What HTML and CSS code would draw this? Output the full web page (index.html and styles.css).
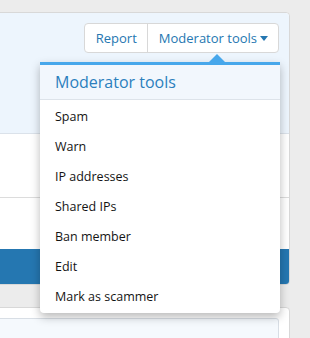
FILE: index.html
```html
<!DOCTYPE html>
<html lang="en">
<head>
    <meta charset="UTF-8">
    <title>Member profile</title>
    <link rel="stylesheet" href="styles.css">
</head>
<body>

    <div class="page">

        <!-- Cabeçalho do perfil -->
        <div class="block">
            <div class="block-top">
                <div class="button-group">
                    <a href="#" class="button">Report</a>
                    <a href="#" class="button is-open">Moderator tools<span class="caret"></span></a>
                </div>

                <!-- Menu de moderação -->
                <div class="menu">
                    <span class="menu-arrow"></span>
                    <h3 class="menu-header">Moderator tools</h3>
                    <div class="menu-list">
                        <a href="#" class="menu-item">Spam</a>
                        <a href="#" class="menu-item">Warn</a>
                        <a href="#" class="menu-item">IP addresses</a>
                        <a href="#" class="menu-item">Shared IPs</a>
                        <a href="#" class="menu-item">Ban member</a>
                        <a href="#" class="menu-item">Edit</a>
                        <a href="#" class="menu-item">Mark as scammer</a>
                    </div>
                </div>
            </div>
            <div class="block-row"></div>
            <div class="block-row last"></div>
            <div class="block-footer"></div>
        </div>

        <div class="block">
            <div class="block-body">
                <div class="inner-box"></div>
            </div>
        </div>

    </div>

</body>
</html>
```

FILE: styles.css
```css
* {
    box-sizing: border-box;
    margin: 0;
    padding: 0;
}

body {
    font-family: "Open Sans", "Noto Sans", Arial, sans-serif;
    background-color: #ececec;
    overflow: hidden;
}

.page {
    padding-top: 12px;
    display: flex;
    flex-direction: column;
    gap: 22px;
}

/* Blocos */
.block {
    width: 301px;
    margin-left: -11px;
    background-color: #fff;
    border: 1px solid #d8d8d8;
    border-radius: 4px;
}

.block-top {
    position: relative;
    height: 121px;
    background-color: #edf5fd;
    border-bottom: 1px solid #dbe2ea;
    border-radius: 4px 4px 0 0;
    display: flex;
    justify-content: flex-end;
    align-items: flex-start;
    padding: 10px 10px 0 0;
}

.block-row {
    height: 64px;
    border-bottom: 1px solid #dcdcdc;
}

.block-row.last {
    height: 51px;
    border-bottom: none;
}

.block-footer {
    height: 35px;
    background-color: #2577b1;
    border-radius: 0 0 3px 3px;
}

.block-body {
    padding: 10px 10px 0 0;
    height: 60px;
}

.inner-box {
    height: 50px;
    background-color: #f5f9fd;
    border: 1px solid #d8dee5;
    border-radius: 3px;
}

/* Botões */
.button-group {
    display: flex;
    background-color: #fff;
    border: 1px solid #d8d8d8;
    border-radius: 4px;
}

.button {
    display: flex;
    align-items: center;
    height: 28px;
    padding: 0 10px 0 11px;
    font-size: 13px;
    color: #2577b1;
    text-decoration: none;
}

.button + .button {
    border-left: 1px solid #d8d8d8;
}

.caret {
    margin-left: 3px;
    border-left: 4px solid transparent;
    border-right: 4px solid transparent;
    border-top: 5px solid #2577b1;
}

/* Menu */
.menu {
    position: absolute;
    top: 49px;
    left: 50px;
    width: 240px;
    z-index: 10;
    background-color: #fff;
    border-top: 3px solid #47a7eb;
    border-radius: 0 0 4px 4px;
    box-shadow: 0 4px 10px rgba(0, 0, 0, 0.28);
}

.menu-arrow {
    position: absolute;
    top: -11px;
    left: 169px;
    border-left: 8px solid transparent;
    border-right: 8px solid transparent;
    border-bottom: 8px solid #47a7eb;
}

.menu-header {
    height: 35px;
    padding: 0 15px;
    font-size: 16px;
    font-weight: normal;
    line-height: 34px;
    color: #2b7fbd;
    background-color: #f2f7fd;
    border-bottom: 1px solid #dde3ea;
}

.menu-list {
    padding: 2px 0 1px;
}

.menu-item {
    display: block;
    height: 30px;
    line-height: 30px;
    padding: 0 15px;
    font-size: 12.5px;
    color: #141414;
    text-decoration: none;
}
```
